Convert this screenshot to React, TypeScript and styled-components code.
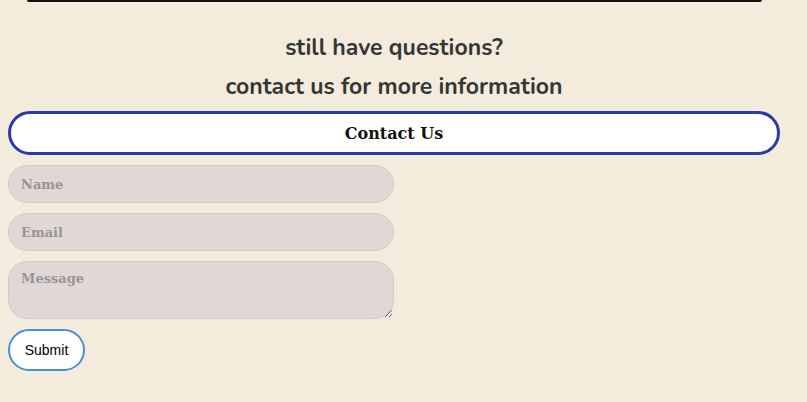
import React from "react";
import styled, { createGlobalStyle } from "styled-components";

const Global = createGlobalStyle`
  html, body { margin: 0; padding: 0; background: #f3ecdd; }
  body { margin: 0 8px 8px; overflow: hidden; }
`;

const Page = styled.div`
  width: 772px;
  display: flex;
  flex-direction: column;
`;

const TopEdge = styled.div`
  height: 2px;
  margin: 0 18px 0 19px;
  background: #111;
  border-radius: 0 0 6px 6px;
`;

const Heading = styled.h2<{ $top: number }>`
  margin: ${(p) => p.$top}px 0 0;
  font-family: "Nunito", "Open Sans", sans-serif;
  font-weight: 700;
  font-size: 23px;
  line-height: 28px;
  color: #363636;
  text-align: center;
`;

const ContactBar = styled.div`
  margin-top: 10px;
  height: 44px;
  box-sizing: border-box;
  border: 3px solid #2c3aa8;
  border-radius: 22px;
  background: #fff;
  display: flex;
  align-items: center;
  justify-content: center;
  font-family: "DejaVu Serif", "Liberation Serif", serif;
  font-weight: 700;
  font-size: 16px;
  color: #111;
`;

const Form = styled.form`
  display: flex;
  flex-direction: column;
  align-items: flex-start;
  gap: 10px;
  margin-top: 10px;
`;

const fieldBase = `
  width: 386px;
  box-sizing: border-box;
  background: #e0d7d7;
  border: 1px solid #d3c9c8;
  border-radius: 19px;
  padding: 0 12px;
  font-family: "DejaVu Serif", "Liberation Serif", serif;
  font-weight: 700;
  font-size: 13px;
  color: #333;
  outline: none;
  &::placeholder { color: #9a9494; }
`;

const Input = styled.input`
  ${fieldBase}
  height: 38px;
`;

const TextArea = styled.textarea`
  ${fieldBase}
  height: 58px;
  padding-top: 9px;
  resize: both;
  display: block;
`;

const Submit = styled.button`
  height: 42px;
  width: 77px;
  box-sizing: border-box;
  background: #fff;
  border: 2px solid #4a8fd6;
  border-radius: 21px;
  font-family: "Liberation Sans", Arial, sans-serif;
  font-size: 14px;
  color: #000;
  padding: 0;
`;

export default function App() {
  return (
    <>
      <Global />
      <Page>
        <TopEdge />
        <Heading $top={32}>still have questions?</Heading>
        <Heading $top={11}>contact us for more information</Heading>
        <ContactBar>Contact Us</ContactBar>
        <Form onSubmit={(e) => e.preventDefault()}>
          <Input placeholder="Name" />
          <Input placeholder="Email" />
          <TextArea placeholder="Message" />
          <Submit type="submit">Submit</Submit>
        </Form>
      </Page>
    </>
  );
}
